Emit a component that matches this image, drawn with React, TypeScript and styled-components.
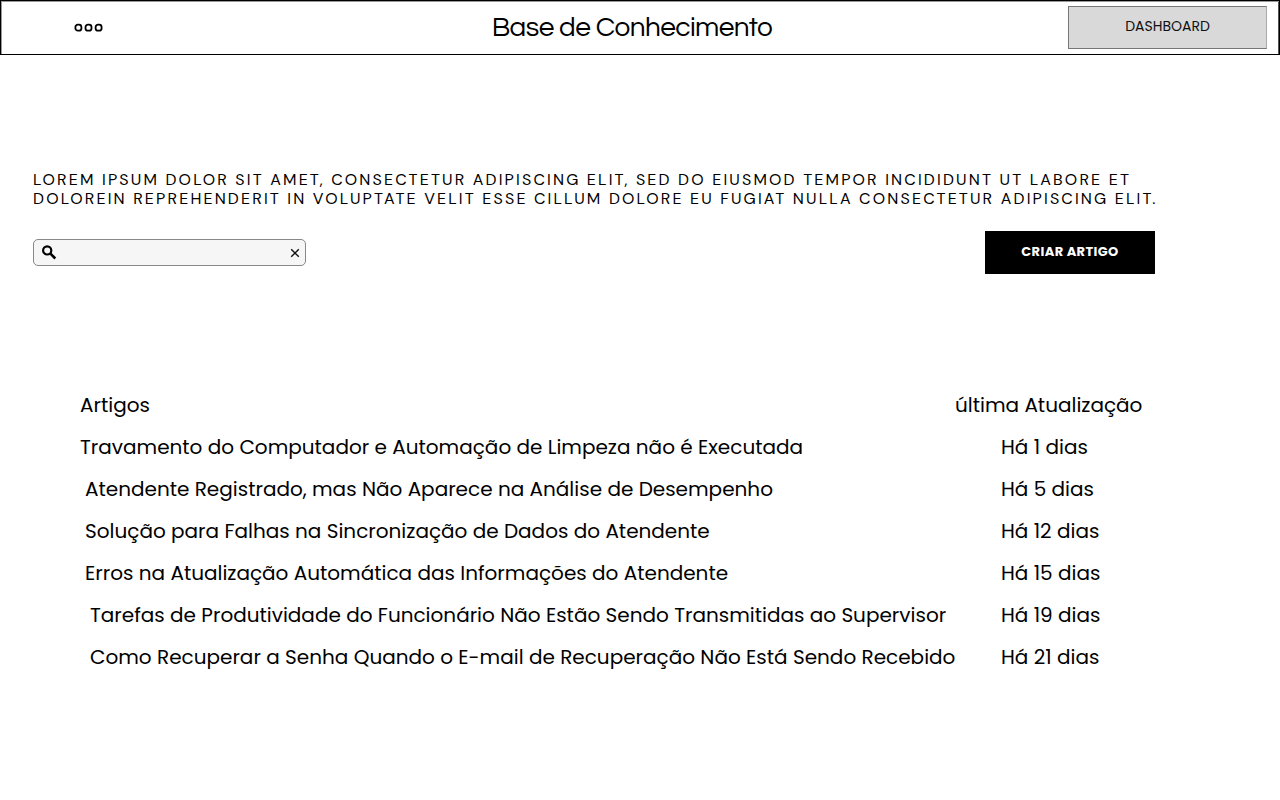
import React from "react";
import styled, { createGlobalStyle } from "styled-components";

const GlobalStyle = createGlobalStyle`
  *, *::before, *::after { box-sizing: border-box; }
  body {
    margin: 0;
    background: #fff;
    color: #000;
    font-family: Poppins, Inter, "Open Sans", sans-serif;
  }
`;

const Header = styled.header`
  display: grid;
  grid-template-columns: 1fr auto 1fr;
  align-items: center;
  height: 55px;
  padding: 0 12px 0 72px;
  border: 1px solid #000;
  box-shadow: inset 1px 1px 0 #999, inset -1px 0 0 #555;
`;

const MenuButton = styled.button`
  display: flex;
  justify-self: start;
  padding: 0;
  border: 0;
  background: none;
`;

const Title = styled.h1`
  margin: 0 0 0 -76px;
  font-family: Questrial, Inter, sans-serif;
  font-size: 28px;
  line-height: 32px;
  font-weight: 400;
  letter-spacing: -0.02em;
`;

const DashboardButton = styled.button`
  justify-self: end;
  width: 199px;
  height: 43px;
  border: 1px solid #777;
  border-right-color: #aaa;
  padding: 0 0 2px;
  background: #d9d9d9;
  color: #111;
  font-family: inherit;
  font-size: 14px;
`;

const Main = styled.main`
  padding: 115px 119px 48px 33px;
`;

const Intro = styled.p`
  margin: 0;
  font-family: "DM Sans", Inter, sans-serif;
  font-size: 16px;
  line-height: 19px;
  letter-spacing: 0.135em;
  text-transform: uppercase;
`;

const Toolbar = styled.div`
  display: flex;
  align-items: center;
  justify-content: space-between;
  margin-top: 23px;
  padding-right: 6px;
`;

const SearchBox = styled.form`
  display: flex;
  align-items: center;
  width: 273px;
  height: 27px;
  padding: 0 5px 0 8px;
  border: 1px solid #888;
  border-radius: 5px;
  background: #f6f6f6;
`;

const SearchInput = styled.input`
  flex: 1;
  min-width: 0;
  border: 0;
  outline: 0;
  background: transparent;
  font: inherit;
  font-size: 14px;
`;

const ClearButton = styled.button`
  display: flex;
  padding: 0;
  border: 0;
  background: none;
`;

const CreateButton = styled.button`
  width: 170px;
  height: 43px;
  padding: 0 0 2px;
  border: 0;
  background: #000;
  color: #fff;
  font-family: inherit;
  font-size: 13px;
  font-weight: 700;
  letter-spacing: 0.03em;
`;

const Articles = styled.table`
  width: calc(100% - 47px);
  margin: 110px 0 0 47px;
  border-collapse: collapse;
  table-layout: fixed;
  font-size: 20px;
  line-height: 30px;
  white-space: nowrap;
`;

const HeadCell = styled.th<{ $date?: boolean }>`
  width: ${(p) => (p.$date ? "206px" : "auto")};
  padding: 6px 0;
  font-weight: 400;
  text-align: left;
`;

const TitleCell = styled.td<{ $level: number }>`
  padding: 6px 0 6px ${(p) => p.$level * 5}px;
`;

const DateCell = styled.td`
  padding: 6px 0 6px 46px;
`;

const articles = [
  { title: "Travamento do Computador e Automação de Limpeza não é Executada", date: "Há 1 dias", level: 0 },
  { title: "Atendente Registrado, mas Não Aparece na Análise de Desempenho", date: "Há 5 dias", level: 1 },
  { title: "Solução para Falhas na Sincronização de Dados do Atendente", date: "Há 12 dias", level: 1 },
  { title: "Erros na Atualização Automática das Informações do Atendente", date: "Há 15 dias", level: 1 },
  { title: "Tarefas de Produtividade do Funcionário Não Estão Sendo Transmitidas ao Supervisor", date: "Há 19 dias", level: 2 },
  { title: "Como Recuperar a Senha Quando o E-mail de Recuperação Não Está Sendo Recebido", date: "Há 21 dias", level: 2 },
];

export default function App() {
  return (
    <>
      <GlobalStyle />
      <Header>
        <MenuButton type="button" aria-label="Menu">
          <svg width="32" height="10" viewBox="0 0 32 10" fill="none" stroke="#000" strokeWidth="1.8">
            <rect x="2.4" y="1.7" width="6" height="6" rx="2.5" />
            <rect x="12.5" y="1.7" width="6" height="6" rx="2.5" />
            <rect x="22.6" y="1.7" width="6" height="6" rx="2.5" />
          </svg>
        </MenuButton>
        <Title>Base de Conhecimento</Title>
        <DashboardButton type="button">DASHBOARD</DashboardButton>
      </Header>
      <Main>
        <Intro>
          Lorem ipsum dolor sit amet, consectetur adipiscing elit, sed do eiusmod tempor incididunt ut labore et
          <br />
          dolorein reprehenderit in voluptate velit esse cillum dolore eu fugiat nulla consectetur adipiscing elit.
        </Intro>
        <Toolbar>
          <SearchBox role="search">
            <svg width="15" height="15" viewBox="0 0 15 15" fill="none" stroke="#000" aria-hidden="true">
              <circle cx="5.2" cy="5.4" r="4.1" strokeWidth="2.2" />
              <path d="M8.2 8.4L13.3 13.5" strokeWidth="2.6" />
            </svg>
            <SearchInput type="text" aria-label="Buscar artigos" />
            <ClearButton type="reset" aria-label="Limpar busca">
              <svg width="10" height="10" viewBox="0 0 10 10" stroke="#111" strokeWidth="1.4">
                <path d="M1.2 1.2L8.8 8.8M8.8 1.2L1.2 8.8" />
              </svg>
            </ClearButton>
          </SearchBox>
          <CreateButton type="button">CRIAR ARTIGO</CreateButton>
        </Toolbar>
        <Articles>
          <thead>
            <tr>
              <HeadCell scope="col">Artigos</HeadCell>
              <HeadCell scope="col" $date>última Atualização</HeadCell>
            </tr>
          </thead>
          <tbody>
            {articles.map((a) => (
              <tr key={a.title}>
                <TitleCell $level={a.level}>{a.title}</TitleCell>
                <DateCell>{a.date}</DateCell>
              </tr>
            ))}
          </tbody>
        </Articles>
      </Main>
    </>
  );
}
